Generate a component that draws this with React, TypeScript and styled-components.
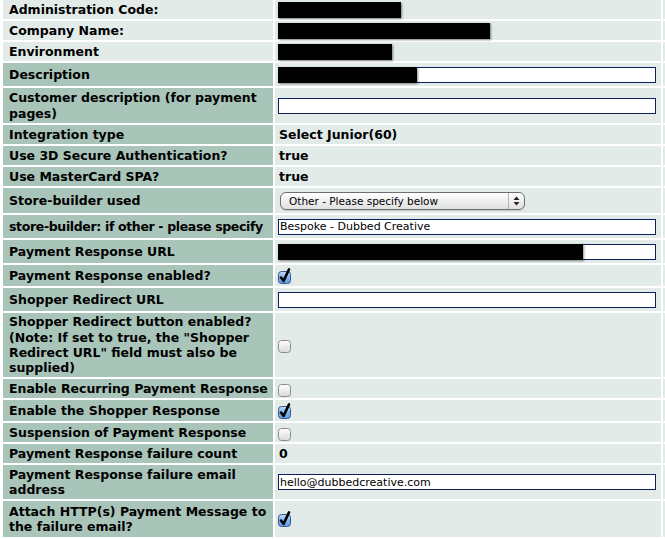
import styled, { createGlobalStyle } from "styled-components";
import type { ReactNode } from "react";

const GlobalStyle = createGlobalStyle`
  body {
    margin: 0;
    background: #ffffff;
    font-family: "DejaVu Sans", Verdana, sans-serif;
    color: #000;
    overflow: hidden;
  }
`;

const Table = styled.div`
  display: flex;
  flex-direction: column;
  gap: 2px;
  padding-left: 3px;
`;

const Row = styled.div<{ $h: number }>`
  display: grid;
  grid-template-columns: 270px 386px 2px;
  column-gap: 2px;
  height: ${(p) => p.$h}px;
`;

const Label = styled.div<{ $light?: boolean; $tight?: boolean }>`
  display: flex;
  align-items: center;
  padding: 0 1px 0 6px;
  background: ${(p) => (p.$light ? "#e2ebe8" : "#a9c4b9")};
  font-size: 12.5px;
  font-weight: bold;
  line-height: 15.3px;
  white-space: ${(p) => (p.$tight ? "nowrap" : "normal")};
  letter-spacing: ${(p) => (p.$tight ? "-0.35px" : "0")};
`;

const Value = styled.div`
  display: flex;
  align-items: center;
  padding: 0 3px;
  background: #e2ebe8;
  font-size: 12.5px;
  font-weight: bold;
`;

const Edge = styled.div`
  background: #e2ebe8;
`;

const ValueText = styled.span`
  padding-left: 1px;
`;

const Redaction = styled.div<{ $w: number }>`
  width: ${(p) => p.$w}px;
  height: 16px;
  background: #000;
  box-shadow: 1px 1px 2px rgba(0, 0, 0, 0.45);
`;

const FieldWrap = styled.div`
  position: relative;
  display: flex;
`;

const Cover = styled(Redaction)`
  position: absolute;
  left: 0;
  top: 0;
`;

const TextField = styled.input`
  box-sizing: border-box;
  width: 378px;
  height: 16px;
  margin: 0;
  padding: 0 1px;
  border: 1px solid #0b1f5c;
  background: #fff;
  font-family: "DejaVu Sans", Verdana, sans-serif;
  font-size: 11px;
  line-height: 13px;
  color: #000;
  outline: none;
`;

const SelectBox = styled.div`
  box-sizing: border-box;
  display: flex;
  align-items: center;
  width: 245px;
  height: 18px;
  margin-left: 2px;
  border: 1px solid #6f6f6f;
  border-radius: 6px;
  background: linear-gradient(#ffffff, #ececec 60%, #e0e0e0);
  font-size: 10.5px;
  font-weight: normal;
  box-shadow: 0 1px 1px rgba(0, 0, 0, 0.15);
`;

const SelectText = styled.span`
  flex: 1;
  padding-left: 8px;
`;

const SelectArrows = styled.span`
  display: flex;
  align-items: center;
  justify-content: center;
  width: 15px;
  height: 100%;
  border-left: 1px solid #b5b5b5;
`;

function Field({ value = "", cover }: { value?: string; cover?: number }) {
  return (
    <FieldWrap>
      <TextField readOnly value={value} />
      {cover ? <Cover $w={cover} /> : null}
    </FieldWrap>
  );
}

function Check({ on }: { on?: boolean }) {
  return (
    <svg width="14" height="16" viewBox="0 0 14 16">
      <defs>
        <linearGradient id="cbOn" x1="0" y1="0" x2="0" y2="1">
          <stop offset="0" stopColor="#c4dcfa" />
          <stop offset="0.5" stopColor="#7fb2ee" />
          <stop offset="1" stopColor="#5f9de6" />
        </linearGradient>
        <linearGradient id="cbOff" x1="0" y1="0" x2="0" y2="1">
          <stop offset="0" stopColor="#ffffff" />
          <stop offset="1" stopColor="#d9d9d9" />
        </linearGradient>
      </defs>
      <rect
        x="0.5"
        y="3.5"
        width="12"
        height="12"
        rx="3"
        fill={on ? "url(#cbOn)" : "url(#cbOff)"}
        stroke={on ? "#37588f" : "#8c8c8c"}
      />
      {on && (
        <path
          d="M3 9.6 L5.6 12.9 L11 1.4"
          fill="none"
          stroke="#000"
          strokeWidth="2.5"
          strokeLinecap="round"
          strokeLinejoin="round"
        />
      )}
    </svg>
  );
}

function Select({ label }: { label: string }) {
  return (
    <SelectBox>
      <SelectText>{label}</SelectText>
      <SelectArrows>
        <svg width="7" height="10" viewBox="0 0 7 10">
          <path d="M3.5 0.5 L6.5 4 L0.5 4 Z" fill="#222" />
          <path d="M3.5 9.5 L6.5 6 L0.5 6 Z" fill="#222" />
        </svg>
      </SelectArrows>
    </SelectBox>
  );
}

interface RowData {
  label: string;
  h: number;
  light?: boolean;
  tight?: boolean;
  value: ReactNode;
}

const rows: RowData[] = [
  { label: "Administration Code:", h: 19, light: true, value: <Redaction $w={123} /> },
  { label: "Company Name:", h: 19, light: true, value: <Redaction $w={212} /> },
  { label: "Environment", h: 19, light: true, value: <Redaction $w={114} /> },
  { label: "Description", h: 23, value: <Field cover={139} /> },
  { label: "Customer description (for payment pages)", h: 35, value: <Field /> },
  { label: "Integration type", h: 19, value: <ValueText>Select Junior(60)</ValueText> },
  { label: "Use 3D Secure Authentication?", h: 19, value: <ValueText>true</ValueText> },
  { label: "Use MasterCard SPA?", h: 19, value: <ValueText>true</ValueText> },
  { label: "Store-builder used", h: 25, value: <Select label="Other - Please specify below" /> },
  {
    label: "store-builder: if other - please specify",
    h: 23,
    tight: true,
    value: <Field value="Bespoke - Dubbed Creative" />,
  },
  { label: "Payment Response URL", h: 23, value: <Field cover={305} /> },
  { label: "Payment Response enabled?", h: 21, value: <Check on /> },
  { label: "Shopper Redirect URL", h: 23, value: <Field /> },
  {
    label:
      'Shopper Redirect button enabled? (Note: If set to true, the "Shopper Redirect URL" field must also be supplied)',
    h: 64,
    value: <Check />,
  },
  { label: "Enable Recurring Payment Response", h: 19, value: <Check /> },
  { label: "Enable the Shopper Response", h: 21, value: <Check on /> },
  { label: "Suspension of Payment Response", h: 19, value: <Check /> },
  { label: "Payment Response failure count", h: 19, value: <ValueText>0</ValueText> },
  {
    label: "Payment Response failure email address",
    h: 34,
    value: <Field value="hello@dubbedcreative.com" />,
  },
  { label: "Attach HTTP(s) Payment Message to the failure email?", h: 36, value: <Check on /> },
];

export default function App() {
  return (
    <>
      <GlobalStyle />
      <Table>
        {rows.map((row) => (
          <Row key={row.label} $h={row.h}>
            <Label $light={row.light} $tight={row.tight}>
              {row.label}
            </Label>
            <Value>{row.value}</Value>
            <Edge />
          </Row>
        ))}
      </Table>
    </>
  );
}
